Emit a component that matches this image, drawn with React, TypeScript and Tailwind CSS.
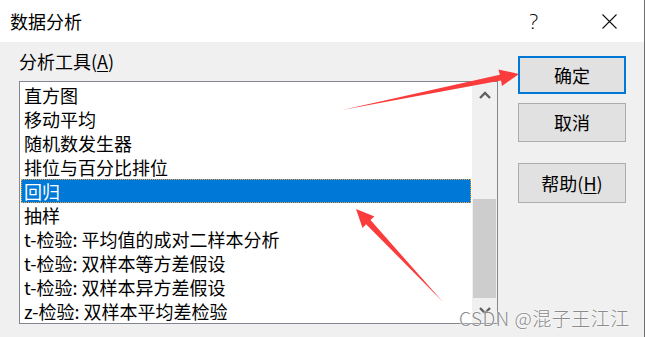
import React from 'react';

const items = [
    '直方图',
    '移动平均',
    '随机数发生器',
    '排位与百分比排位',
    '回归',
    '抽样',
    't-检验: 平均值的成对二样本分析',
    't-检验: 双样本等方差假设',
    't-检验: 双样本异方差假设',
    'z-检验: 双样本平均差检验',
];

const font = { fontFamily: '"Noto Sans CJK SC", "Noto Sans", sans-serif' };

const Arrows = () => (
    <svg className="absolute left-0 top-0 pointer-events-none" width="646" height="337">
        {/* arrow to 确定 */}
        <polygon
            points="342,110 501,80.5 502,86 519,74 498.5,69.5 499.8,74.7"
            fill="#fa3c3c"
        />
        {/* arrow to 回归 */}
        <polygon
            points="443,302 366.1,224.2 362.5,228 356,209 374.5,216.6 370.5,220.1"
            fill="#fa3c3c"
        />
    </svg>
);

export default function App() {
    return (
        <div className="relative w-[646px] h-[337px] overflow-hidden bg-white flex" style={font}>
            <div className="w-[645px] h-full border-r border-[#6e6e6e] flex flex-col">
                {/* Title bar */}
                <div className="h-[42px] bg-white flex items-center text-black">
                    <span className="ml-[10px] text-[18px] leading-none">数据分析</span>
                    <span className="ml-auto mr-[64px] text-[21px] font-light leading-none" style={{ fontFamily: '"Open Sans", "Noto Sans", sans-serif' }}>?</span>
                    <svg width="15" height="15" className="mr-[27px]" viewBox="0 0 15 15">
                        <path d="M0.5 0.5 L14.5 14.5 M14.5 0.5 L0.5 14.5" stroke="#111" strokeWidth="1.1" />
                    </svg>
                </div>

                {/* Body */}
                <div className="flex-1 bg-[#f0f0f0] flex">
                    <div className="pl-[19px] pt-[7px]">
                        <div className="text-[18px] leading-[24px] text-black">
                            分析工具(<span className="underline underline-offset-2">A</span>)
                        </div>
                        <div className="mt-[8px] w-[479px] h-[243px] border border-[#828790] bg-white flex">
                            <div className="flex-1 px-[1px] pt-[1px]">
                                {items.map((t, i) =>
                                    i === 4 ? (
                                        <div
                                            key={t}
                                            className="h-[24px] leading-[22px] pl-[2px] bg-[#0078d7] text-white text-[18px] border border-dotted border-[#f7a534] whitespace-nowrap"
                                        >
                                            {t}
                                        </div>
                                    ) : (
                                        <div key={t} className="h-[24px] leading-[24px] pl-[3px] text-black text-[18px] whitespace-nowrap">
                                            {t}
                                        </div>
                                    )
                                )}
                            </div>
                            {/* Scrollbar */}
                            <div className="w-[25px] bg-[#f0f0f0] flex flex-col">
                                <div className="h-[25px] flex items-center justify-center">
                                    <svg width="12" height="8" viewBox="0 0 12 8">
                                        <path d="M1 7 L6 2 L11 7" stroke="#606060" strokeWidth="2.4" fill="none" />
                                    </svg>
                                </div>
                                <div className="flex-1 flex flex-col justify-end">
                                    <div className="h-[99px] mx-[1px] bg-[#cdcdcd]" />
                                </div>
                                <div className="h-[25px] flex items-center justify-center">
                                    <svg width="12" height="8" viewBox="0 0 12 8">
                                        <path d="M1 1 L6 6 L11 1" stroke="#606060" strokeWidth="2.4" fill="none" />
                                    </svg>
                                </div>
                            </div>
                        </div>
                    </div>

                    {/* Buttons */}
                    <div className="ml-[20px] mt-[14px] w-[108px] flex flex-col">
                        <button className="h-[38px] bg-[#e1e1e1] border-2 border-[#0078d7] text-[18px] text-black">确定</button>
                        <button className="mt-[9px] h-[39px] bg-[#e1e1e1] border border-[#adadad] text-[18px] text-black">取消</button>
                        <button className="mt-[21px] h-[40px] bg-[#e1e1e1] border border-[#adadad] text-[18px] text-black">
                            帮助(<span className="underline underline-offset-2">H</span>)
                        </button>
                    </div>
                </div>
            </div>

            <Arrows />

            <div
                className="absolute left-[459px] top-[306px] text-[19px] leading-[24px] tracking-[0.5px] font-light text-[#8a8a8a] whitespace-nowrap"
                style={{ textShadow: '0 0 2px #fff, 0 0 2px #fff' }}
            >
                CSDN @混子王江江
            </div>
        </div>
    );
}
